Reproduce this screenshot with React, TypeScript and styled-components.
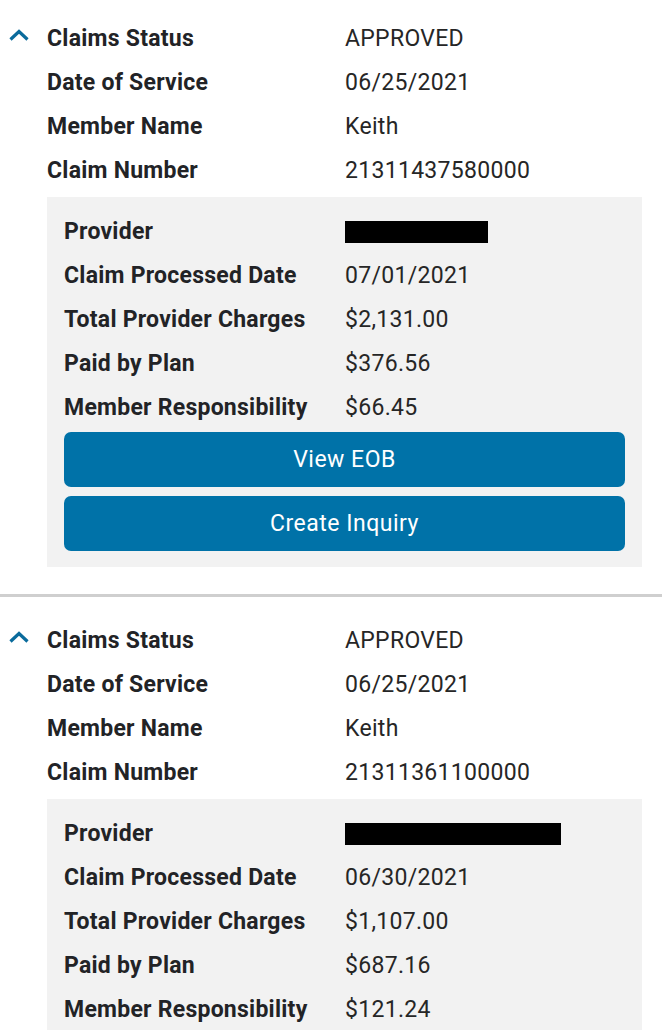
import React from "react";
import styled, { createGlobalStyle } from "styled-components";

const Global = createGlobalStyle`
  html, body { margin: 0; padding: 0; background: #fff; }
  body { font-family: Roboto, "Noto Sans", sans-serif; color: #202124; }
`;

const Page = styled.div`
  width: 662px;
  display: flex;
  flex-direction: column;
`;

const Card = styled.section<{ $first?: boolean }>`
  padding: ${(p) => (p.$first ? "16px" : "21px")} 20px 27px 0;
  display: flex;
  flex-direction: column;
`;

const Divider = styled.hr`
  margin: 0;
  border: none;
  height: 3px;
  background: #cfcfcf;
`;

const Row = styled.div<{ $inset?: boolean }>`
  display: grid;
  grid-template-columns: ${(p) => (p.$inset ? "281px 1fr" : "298px 1fr")};
  align-items: center;
  height: 44px;
  position: relative;
`;

const Label = styled.div`
  font-size: 23px;
  font-weight: 700;
  letter-spacing: 0.25px;
  color: #222326;
  white-space: nowrap;
`;

const Value = styled.div`
  font-size: 23px;
  font-weight: 400;
  letter-spacing: 0.3px;
  color: #262626;
  white-space: nowrap;
`;

const Head = styled.div`
  display: flex;
  flex-direction: column;
  padding-left: 47px;
`;

const Toggle = styled.span`
  position: absolute;
  left: -39px;
  top: 12px;
  width: 22px;
  height: 14px;
  display: flex;
`;

const Detail = styled.div`
  margin-left: 47px;
  background: #f2f2f2;
  padding: 12px 17px 16px 17px;
  display: flex;
  flex-direction: column;
  margin-top: 5px;
`;

const Buttons = styled.div`
  display: flex;
  flex-direction: column;
  gap: 9px;
  margin-top: 3px;
`;

const Button = styled.button`
  height: 55px;
  border: none;
  border-radius: 7px;
  background: #0072a8;
  color: #fff;
  font-family: Roboto, "Noto Sans", sans-serif;
  font-size: 23px;
  font-weight: 400;
  letter-spacing: 0.5px;
  cursor: pointer;
`;

const Redact = styled.span<{ $w: number }>`
  display: inline-block;
  width: ${(p) => p.$w}px;
  height: 22px;
  background: #000;
  vertical-align: middle;
`;

const Chevron = () => (
  <svg width="22" height="14" viewBox="0 0 22 14">
    <path d="M2.5 11.5 L11 3.5 L19.5 11.5" fill="none" stroke="#0a6b9c" strokeWidth="3.2" />
  </svg>
);

type Claim = {
  date: string;
  name: string;
  number: string;
  redactW: number;
  processed: string;
  charges: string;
  paid: string;
  resp: string;
  buttons: boolean;
};

const claims: Claim[] = [
  {
    date: "06/25/2021",
    name: "Keith",
    number: "21311437580000",
    redactW: 143,
    processed: "07/01/2021",
    charges: "$2,131.00",
    paid: "$376.56",
    resp: "$66.45",
    buttons: true,
  },
  {
    date: "06/25/2021",
    name: "Keith",
    number: "21311361100000",
    redactW: 216,
    processed: "06/30/2021",
    charges: "$1,107.00",
    paid: "$687.16",
    resp: "$121.24",
    buttons: false,
  },
];

export default function App() {
  return (
    <Page>
      <Global />
      {claims.map((c, i) => (
        <React.Fragment key={i}>
          {i > 0 && <Divider />}
          <Card $first={i === 0}>
            <Head>
              <Row>
                <Toggle>
                  <Chevron />
                </Toggle>
                <Label>Claims Status</Label>
                <Value>APPROVED</Value>
              </Row>
              <Row>
                <Label>Date of Service</Label>
                <Value>{c.date}</Value>
              </Row>
              <Row>
                <Label>Member Name</Label>
                <Value>{c.name}</Value>
              </Row>
              <Row>
                <Label>Claim Number</Label>
                <Value>{c.number}</Value>
              </Row>
            </Head>
            <Detail>
              <Row $inset>
                <Label>Provider</Label>
                <Value>
                  <Redact $w={c.redactW} />
                </Value>
              </Row>
              <Row $inset>
                <Label>Claim Processed Date</Label>
                <Value>{c.processed}</Value>
              </Row>
              <Row $inset>
                <Label>Total Provider Charges</Label>
                <Value>{c.charges}</Value>
              </Row>
              <Row $inset>
                <Label>Paid by Plan</Label>
                <Value>{c.paid}</Value>
              </Row>
              <Row $inset>
                <Label>Member Responsibility</Label>
                <Value>{c.resp}</Value>
              </Row>
              {c.buttons && (
                <Buttons>
                  <Button>View EOB</Button>
                  <Button>Create Inquiry</Button>
                </Buttons>
              )}
            </Detail>
          </Card>
        </React.Fragment>
      ))}
    </Page>
  );
}
